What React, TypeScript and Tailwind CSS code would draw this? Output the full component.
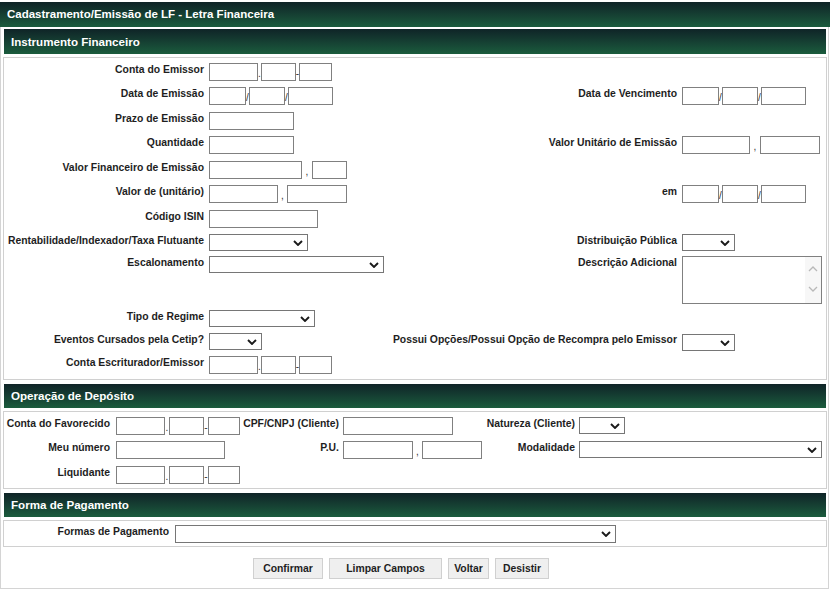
import React from 'react';

const LABEL = 'text-right font-bold text-[10.4px] leading-[13px] text-[#1e1e1e] whitespace-nowrap';

function Inp({ w }: { w: string }) {
  return <input className={`h-[18px] shrink-0 border border-[#808080] bg-white outline-none ${w}`} />;
}

function Sep({ c, w }: { c: string; w: string }) {
  return (
    <span className={`h-[18px] shrink-0 flex items-end justify-center pb-[1px] text-[10px] leading-[12px] text-[#333] ${w}`}>
      {c}
    </span>
  );
}

function Sel({ w }: { w: string }) {
  return (
    <div className={`h-[17px] shrink-0 border border-[#767676] bg-white flex items-center justify-end pr-[4px] ${w}`}>
      <svg width="10" height="6" viewBox="0 0 10 6">
        <path d="M1 1l4 4 4-4" fill="none" stroke="#1a1a1a" strokeWidth="1.9" />
      </svg>
    </div>
  );
}

function Header({ title, h }: { title: string; h: string }) {
  return (
    <div className={`mx-[1px] ${h} flex items-center pl-[7px] bg-linear-to-b from-[#0f2427] to-[#1b5c3d] text-white font-bold text-[11.6px]`}>
      {title}
    </div>
  );
}

// 4-column row of the first section
function Row({ h, l1, c1, l2, c2 }: { h: string; l1?: string; c1?: React.ReactNode; l2?: string; c2?: React.ReactNode }) {
  return (
    <div className={`grid grid-cols-[203px_183px_290px_1fr] ${h}`}>
      <div className={`${LABEL} pr-[3px]`}>{l1}</div>
      <div className="pl-[2px] flex items-start">{c1}</div>
      <div className={`${LABEL} pr-[3px]`}>{l2}</div>
      <div className="pl-[2px] flex items-start">{c2}</div>
    </div>
  );
}

function Row6({ h, cells }: { h: string; cells: [string, React.ReactNode, string?, React.ReactNode?, string?, React.ReactNode?] }) {
  const [a, b, c, d, e, f] = cells;
  return (
    <div className={`grid grid-cols-[109px_129px_99px_143px_93px_1fr] ${h}`}>
      <div className={`${LABEL} pr-[3px]`}>{a}</div>
      <div className="pl-[3px] flex items-start">{b}</div>
      <div className={`${LABEL} pr-[2px]`}>{c}</div>
      <div className="pl-[2px] flex items-start">{d}</div>
      <div className={`${LABEL} pr-[2px]`}>{e}</div>
      <div className="pl-[2px] flex items-start">{f}</div>
    </div>
  );
}

function Conta() {
  return (
    <>
      <Inp w="w-[49px]" />
      <Sep c="." w="w-[3px]" />
      <Inp w="w-[35px]" />
      <Sep c="-" w="w-[3px]" />
      <Inp w="w-[33px]" />
    </>
  );
}

function Data() {
  return (
    <>
      <Inp w="w-[37px]" />
      <Sep c="/" w="w-[3px]" />
      <Inp w="w-[36px]" />
      <Sep c="/" w="w-[3px]" />
      <Inp w="w-[45px]" />
    </>
  );
}

function TextArea() {
  return (
    <div className="w-[140px] h-[48px] border border-[#808080] bg-white flex justify-end">
      <div className="w-[16px] h-full bg-[#f7f7f7] flex flex-col items-center pt-[9px] gap-[14px]">
        <svg width="10" height="6" viewBox="0 0 10 6">
          <path d="M1 5l4-4 4 4" fill="none" stroke="#b8b8b8" strokeWidth="1.3" />
        </svg>
        <svg width="10" height="6" viewBox="0 0 10 6">
          <path d="M1 1l4 4 4-4" fill="none" stroke="#b8b8b8" strokeWidth="1.3" />
        </svg>
      </div>
    </div>
  );
}

function Btn({ w, children }: { w: string; children: React.ReactNode }) {
  return (
    <button className={`h-[21px] ${w} border border-[#d0d0d0] bg-[#efefef] text-[10.4px] font-bold text-[#1e1e1e]`}>
      {children}
    </button>
  );
}

export default function App() {
  return (
    <div className="w-[834px] h-[592px] bg-white font-['Liberation_Sans',Arial,sans-serif]">
      <div className="w-[830px] h-[25px] mt-[2px] flex items-center pl-[7px] bg-linear-to-b from-[#0f2427] to-[#1b5c3d] text-white font-bold text-[11.5px]">
        Cadastramento/Emissão de LF - Letra Financeira
      </div>

      <div className="w-[829px] border border-t-0 border-[#d4d4d4] pl-[2px] pr-[1px] pb-[9px]">
        <div className="pt-[2px]">
          <Header title="Instrumento Financeiro" h="h-[25px]" />
        </div>

        <div className="mt-[3px] border border-[#d0d0d0] pt-[5px] pb-[5px]">
          <Row h="h-[24px]" l1="Conta do Emissor" c1={<Conta />} />
          <Row h="h-[25px]" l1="Data de Emissão" c1={<Data />} l2="Data de Vencimento" c2={<Data />} />
          <Row h="h-[24px]" l1="Prazo de Emissão" c1={<Inp w="w-[85px]" />} />
          <Row
            h="h-[25px]"
            l1="Quantidade"
            c1={<Inp w="w-[85px]" />}
            l2="Valor Unitário de Emissão"
            c2={
              <>
                <Inp w="w-[68px]" />
                <Sep c="," w="w-[10px]" />
                <Inp w="w-[60px]" />
              </>
            }
          />
          <Row
            h="h-[24px]"
            l1="Valor Financeiro de Emissão"
            c1={
              <>
                <Inp w="w-[93px]" />
                <Sep c="," w="w-[10px]" />
                <Inp w="w-[35px]" />
              </>
            }
          />
          <Row
            h="h-[25px]"
            l1="Valor de (unitário)"
            c1={
              <>
                <Inp w="w-[69px]" />
                <Sep c="," w="w-[9px]" />
                <Inp w="w-[60px]" />
              </>
            }
            l2="em"
            c2={<Data />}
          />
          <Row h="h-[24px]" l1="Código ISIN" c1={<Inp w="w-[109px]" />} />
          <Row
            h="h-[22px]"
            l1="Rentabilidade/Indexador/Taxa Flutuante"
            c1={<Sel w="w-[99px]" />}
            l2="Distribuição Pública"
            c2={<Sel w="w-[53px]" />}
          />
          <Row
            h="h-[54px]"
            l1="Escalonamento"
            c1={<Sel w="w-[175px]" />}
            l2="Descrição Adicional"
            c2={<TextArea />}
          />
          <Row h="h-[23px]" l1="Tipo de Regime" c1={<Sel w="w-[106px]" />} />
          <Row
            h="h-[23px]"
            l1="Eventos Cursados pela Cetip?"
            c1={<Sel w="w-[53px]" />}
            l2="Possui Opções/Possui Opção de Recompra pelo Emissor"
            c2={<div className="pt-[1px]"><Sel w="w-[53px]" /></div>}
          />
          <Row h="h-[18px]" l1="Conta Escriturador/Emissor" c1={<Conta />} />
        </div>

        <div className="mt-[4px]">
          <Header title="Operação de Depósito" h="h-[24px]" />
        </div>

        <div className="mt-[3px] border border-[#d0d0d0] pt-[5px] pb-[4px]">
          <Row6
            h="h-[24px]"
            cells={[
              'Conta do Favorecido',
              <>
                <Inp w="w-[49px]" />
                <Sep c="." w="w-[4px]" />
                <Inp w="w-[35px]" />
                <Sep c="-" w="w-[4px]" />
                <Inp w="w-[32px]" />
              </>,
              'CPF/CNPJ (Cliente)',
              <Inp w="w-[110px]" />,
              'Natureza (Cliente)',
              <Sel w="w-[46px]" />,
            ]}
          />
          <Row6
            h="h-[25px]"
            cells={[
              'Meu número',
              <Inp w="w-[109px]" />,
              'P.U.',
              <>
                <Inp w="w-[70px]" />
                <Sep c="," w="w-[9px]" />
                <Inp w="w-[60px]" />
              </>,
              'Modalidade',
              <Sel w="w-[243px]" />,
            ]}
          />
          <Row6
            h="h-[18px]"
            cells={[
              'Liquidante',
              <>
                <Inp w="w-[49px]" />
                <Sep c="." w="w-[4px]" />
                <Inp w="w-[35px]" />
                <Sep c="-" w="w-[4px]" />
                <Inp w="w-[32px]" />
              </>,
            ]}
          />
        </div>

        <div className="mt-[4px]">
          <Header title="Forma de Pagamento" h="h-[24px]" />
        </div>

        <div className="mt-[3px] border border-[#d0d0d0] pt-[4px] pb-[3px] grid grid-cols-[168px_1fr]">
          <div className={`${LABEL} pr-[3px]`}>Formas de Pagamento</div>
          <div className="pl-[3px] flex">
            <div className="h-[18px] w-[441px] border border-[#767676] bg-white flex items-center justify-end pr-[4px]">
              <svg width="10" height="6" viewBox="0 0 10 6">
                <path d="M1 1l4 4 4-4" fill="none" stroke="#1a1a1a" strokeWidth="1.9" />
              </svg>
            </div>
          </div>
        </div>

        <div className="pt-[11px] pl-[250px] flex gap-[6px]">
          <Btn w="w-[70px]">Confirmar</Btn>
          <Btn w="w-[113px]">Limpar Campos</Btn>
          <Btn w="w-[41px]">Voltar</Btn>
          <Btn w="w-[54px]">Desistir</Btn>
        </div>
      </div>
    </div>
  );
}
